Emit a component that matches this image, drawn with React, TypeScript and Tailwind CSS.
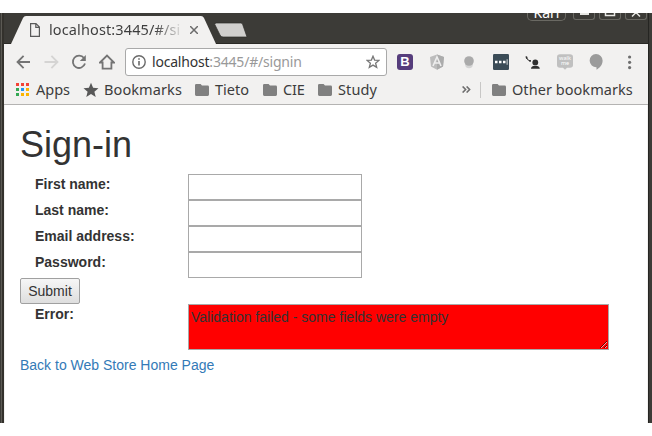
import type { ReactNode } from 'react';

const FolderIcon = () => (
  <svg className="block h-3 w-[15px] shrink-0" viewBox="0 0 15 12" fill="#808080">
    <path d="M1.3 0H5.6L7 1.6H12.8Q14 1.6 14 3V10.6Q14 12 12.7 12H1.3Q0 12 0 10.6V1.3Q0 0 1.3 0Z" />
  </svg>
);

const AppsIcon = () => {
  const colors = ['#f44336', '#f44336', '#f44336', '#34a853', '#2196f3', '#fbb400', '#34a853', '#fbb400', '#fbb400'];
  return (
    <div className="grid h-[13px] w-[13px] shrink-0 grid-cols-[3px_3px_3px] grid-rows-[3px_3px_3px] gap-[2px]">
      {colors.map((c, i) => (
        <span key={i} style={{ backgroundColor: c }} />
      ))}
    </div>
  );
};

const Tab = () => (
  <div className="relative ml-[7px] mt-[3px] h-7 w-[205px] shrink-0">
    <svg className="absolute inset-0 h-7 w-[205px]" viewBox="0 0 205 28">
      <path d="M0 28L12 2Q13 0 15 0H190Q192 0 193 2L205 28Z" fill="#f2f1f0" />
    </svg>
    <div className="relative flex h-7 items-center pl-[19px]">
      <svg className="h-[14px] w-[10px] shrink-0" viewBox="0 0 10 14" fill="none" stroke="#5a5a5a" strokeWidth="1.2">
        <path d="M.6.6H6L9.4 4V13.4H.6ZM5.8.6V4.4H9.4" />
      </svg>
      <span className="mb-0.5 ml-[9px] w-[132px] whitespace-nowrap bg-linear-to-r from-[#3c3c3c] from-80% to-[#3c3c3c]/10 bg-clip-text text-[14.5px] leading-5 tracking-[0.12px] text-transparent">
        localhost:3445/#/si
      </span>
      <svg className="ml-[9px] h-2 w-2" viewBox="0 0 8 8" stroke="#6b6b6b" strokeWidth="1.5">
        <path d="M0 0L8 8M8 0L0 8" />
      </svg>
    </div>
  </div>
);

const WindowButton = ({ children }: { children: ReactNode }) => (
  <div className="h-[7px] w-[22px] rounded-b-[3px] border border-t-0 border-[#6a6963]">
    <svg className="block h-[6px] w-5" viewBox="0 0 20 6" fill="none" stroke="#e8e8e4" strokeWidth="1.5">{children}</svg>
  </div>
);

const TitleBar = () => (
  <div className="flex h-[31px] items-start border-b border-[#2a2925] bg-[#3c3b37]">
    <div className="z-10 -mb-px h-[31px]">
      <Tab />
    </div>
    <svg className="-ml-[2px] mt-[9px] h-4 w-[34px]" viewBox="0 0 34 16">
      <path d="M1.5 1H26.5Q28 1 28.5 2L33 15H9Q7 15 6 13L.8 2.5Z" fill="#d0cfcd" stroke="#2c2b28" strokeWidth=".7" />
    </svg>
    <div className="ml-auto flex gap-1 pr-px">
      <div className="mr-[3px] flex h-2 w-[39px] items-end justify-center overflow-hidden rounded-b-[5px] border border-t-0 border-[#6a6963] text-[14px] leading-[14px] text-white">
        <span>Kari</span>
      </div>
      <WindowButton><path d="M6 1H15" strokeWidth="2" /></WindowButton>
      <WindowButton><path d="M5.5 0V2.5H14.5V0" /></WindowButton>
      <WindowButton><path d="M6 3.5L10 -.5L14 3.5" /></WindowButton>
    </div>
  </div>
);

const AddressBar = () => (
  <div className="ml-[10px] flex h-7 w-[262px] shrink-0 items-center rounded-[3px] border border-[#a9a9a9] bg-white pl-[6px] pr-[6px]">
    <svg className="h-[14px] w-[14px] shrink-0" viewBox="0 0 14 14" fill="none" stroke="#6a6a6a" strokeWidth="1.4">
      <circle cx="7" cy="7" r="6.2" />
      <path d="M7 6V10.5M7 3.2V4.8" strokeWidth="1.6" />
    </svg>
    <span className="ml-[6px] whitespace-nowrap text-[14px] leading-5 tracking-[-0.2px] text-[#333]">
      localhost<span className="text-[#999]">:3445/#/signin</span>
    </span>
    <svg className="ml-auto h-[14px] w-[14px]" viewBox="0 0 14 14" fill="none" stroke="#777" strokeWidth="1.3">
      <path d="M7 1.2L8.6 5.1L12.9 5.4L9.6 8.2L10.7 12.4L7 10.1L3.3 12.4L4.4 8.2L1.1 5.4L5.4 5.1Z" />
    </svg>
  </div>
);

const Toolbar = () => (
  <div className="flex h-9 items-center pl-[12px]">
    <svg className="h-4 w-4" viewBox="0 0 16 16" fill="none" stroke="#747474" strokeWidth="1.8">
      <path d="M14 8H1.8M7.6 1.8L1.5 8L7.6 14.2" />
    </svg>
    <svg className="ml-[12px] h-4 w-4" viewBox="0 0 16 16" fill="none" stroke="#d5d4d3" strokeWidth="1.8">
      <path d="M.5 8H13.2M7.4 1.8L13.5 8L7.4 14.2" />
    </svg>
    <svg className="ml-[11px] h-4 w-4" viewBox="0 0 16 16" fill="none" stroke="#747474" strokeWidth="1.8">
      <path d="M13 4A6.2 6.2 0 1 0 14 9.6" />
      <path d="M14.8 1V7H8.8Z" fill="#747474" stroke="none" />
    </svg>
    <svg className="ml-[12px] h-4 w-4" viewBox="0 0 16 16" fill="none" stroke="#747474" strokeWidth="1.8">
      <path d="M1 8.5L8 1.6L15 8.5H12.4V14.6H3.6V8.5Z" />
    </svg>
    <AddressBar />
    <div className="ml-[10px] flex h-4 w-4 items-center justify-center rounded-[3px] bg-[#563d7c] font-['Liberation_Sans',sans-serif] text-[13px] leading-4 font-bold text-white">B</div>
    <svg className="ml-4 h-4 w-4" viewBox="0 0 16 16">
      <path d="M8 .5L15 3L14 12.5L8 15.7L2 12.5L1 3Z" fill="#bcbcbc" />
      <path d="M8 .5L15 3L14 12.5L8 15.7Z" fill="#acacac" />
      <path d="M4 12L8 3L12 12M5.6 9H10.4" fill="none" stroke="#eee" strokeWidth="1.6" />
    </svg>
    <svg className="ml-4 h-4 w-4" viewBox="0 0 16 16">
      <circle cx="8" cy="10.5" r="3.8" fill="#d4d4d4" />
      <circle cx="8" cy="7" r="4.8" fill="#aaa" />
    </svg>
    <svg className="ml-4 h-4 w-4" viewBox="0 0 16 16">
      <rect width="16" height="16" rx="1.2" fill="#3b4c57" />
      <path d="M2 6.7H4.5V9.2H2ZM6 6.7H8.5V9.2H6ZM10 6.7H12.5V9.2H10ZM13.7 5.2H14.5V10.8H13.7Z" fill="#fff" />
    </svg>
    <svg className="ml-4 h-4 w-4" viewBox="0 0 16 16" fill="#303030">
      <path d="M1.3 3Q2 6.5 5.5 7" fill="none" stroke="#303030" strokeWidth="1" />
      <path d="M.4 2.5L2 2.2L2.7 4.2L1.2 5ZM4 6.2L6 6L5.8 7.8L4 7.6Z" />
      <circle cx="10.3" cy="8.4" r="2.9" />
      <path d="M6 14.7Q6 11.8 10.3 11.8T14.8 14.7Z" />
    </svg>
    <svg className="ml-4 h-4 w-4" viewBox="0 0 16 16">
      <path d="M3 .3H13Q16 .3 16 3V11Q16 13.8 13 13.8H10L8 15.8L6 13.8H3Q0 13.8 0 11V3Q0 .3 3 .3Z" fill="#c0c0c0" />
      <text x="8" y="6.4" textAnchor="middle" fontSize="5.5" fill="#fff">walk</text>
      <text x="8" y="11.4" textAnchor="middle" fontSize="5.5" fill="#fff">me</text>
    </svg>
    <svg className="ml-[15px] h-4 w-4" viewBox="0 0 16 16" fill="#9b9b9b">
      <path d="M8 0A6.6 6.6 0 0 1 14.6 6.7C14.6 10.8 11.8 13.8 8.5 15.7V13.2A6.6 6.6 0 0 1 8 0Z" />
    </svg>
    <svg className="ml-[23px] h-4 w-[6px]" viewBox="0 0 6 16" fill="#6e6e6e">
      <circle cx="2.6" cy="3" r="1.6" />
      <circle cx="2.6" cy="8.3" r="1.6" />
      <circle cx="2.6" cy="13.6" r="1.6" />
    </svg>
  </div>
);

const BookmarksBar = () => (
  <div className="flex h-[25px] items-center whitespace-nowrap border-b border-[#b4b3b2] pb-[5px] pl-[12px] text-[14.5px] leading-5 text-[#3c3c3c]">
    <AppsIcon />
    <span className="mb-0.5 ml-[7px] w-[47px]">Apps</span>
    <svg className="h-4 w-4" viewBox="0 0 16 16" fill="#585858">
      <path d="M8 .8L10.1 5.8L15.5 6.2L11.4 9.7L12.7 15L8 12.1L3.3 15L4.6 9.7L.5 6.2L5.9 5.8Z" />
    </svg>
    <span className="mb-0.5 ml-[5px] w-[91px] tracking-[0.1px]">Bookmarks</span>
    <FolderIcon />
    <span className="mb-0.5 ml-[5px] w-[48px]">Tieto</span>
    <FolderIcon />
    <span className="mb-0.5 ml-[5px] w-[35px] tracking-[-0.2px]">CIE</span>
    <FolderIcon />
    <span className="mb-0.5 ml-[5px] tracking-[0.1px]">Study</span>
    <svg className="ml-auto h-[7px] w-[9px]" viewBox="0 0 9 7" fill="none" stroke="#6e6e6e" strokeWidth="1.6">
      <path d="M.6.5L3.6 3.5L.6 6.5M4.6.5L7.6 3.5L4.6 6.5" />
    </svg>
    <span className="ml-[9px] mr-[11px] h-4 w-px bg-[#c8c7c6]" />
    <FolderIcon />
    <span className="mb-0.5 ml-[5px] w-[136px] tracking-[0.05px]">Other bookmarks</span>
  </div>
);

const Field = ({ label }: { label: string }) => (
  <label className="flex h-[26px]">
    <span className="w-[168px] pl-[15px] font-bold">{label}</span>
    <input className="h-[26px] w-[174px] border border-[#a9a9a9] bg-white px-1 outline-none" />
  </label>
);

const SignInPage = () => (
  <main className="flex-1 border-x border-[#f2f1f0] bg-white pl-[15px] pt-5 font-['Liberation_Sans',Arial,sans-serif] text-[14px] leading-5 text-[#333]">
    <h1 className="mb-[10px] text-[36px] leading-[39px] font-medium">Sign-in</h1>
    <Field label="First name:" />
    <Field label="Last name:" />
    <Field label="Email address:" />
    <Field label="Password:" />
    <button className="block h-[26px] w-[60px] rounded-[2px] border border-[#a0a0a0] bg-linear-to-b from-[#f6f6f6] to-[#dedede] leading-5">Submit</button>
    <div className="flex h-[51px]">
      <span className="w-[168px] pl-[15px] font-bold">Error:</span>
      <textarea
        className="h-[46px] w-[421px] resize border border-[#a9a9a9] bg-[#f00] px-[2px] py-[2px] outline-none"
        defaultValue="Validation failed - some fields were empty"
      />
    </div>
    <a className="block text-[#337ab7]">Back to Web Store Home Page</a>
  </main>
);

export default function App() {
  return (
    <div className="h-[436px] w-[652px] bg-white py-[13px] font-['Noto_Sans',sans-serif]">
      <div className="flex h-[410px] bg-[#3c3b37]">
        <div className="w-1 border-l border-r-2 border-l-[#3c3b37] border-r-[#33312c] bg-[#5c5a54]" />
        <div className="flex w-[644px] flex-col bg-[#f2f1f0]">
          <TitleBar />
          <Toolbar />
          <BookmarksBar />
          <SignInPage />
        </div>
        <div className="w-1 border-l border-[#252522] bg-[#3c3b37]" />
      </div>
    </div>
  );
}
